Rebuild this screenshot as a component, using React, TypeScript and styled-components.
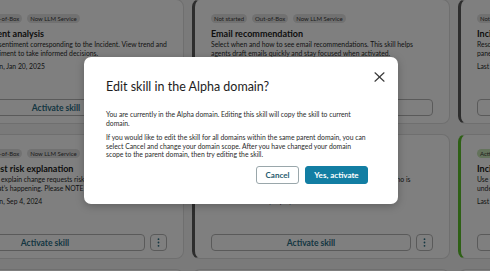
import React from 'react';
import styled, { createGlobalStyle } from 'styled-components';

const Global = createGlobalStyle`
  html, body { margin: 0; padding: 0; background: #f4f4f4; }
  body { font-family: Lato, "Noto Sans", Arial, sans-serif; color: #1d1d1d; }
  #root { width: 490px; height: 271px; overflow: hidden; position: relative; }
  * { box-sizing: border-box; }
`;

const Page = styled.div`
  width: 490px;
  height: 271px;
  overflow: hidden;
  position: relative;
  background: #f4f4f4;
`;

const Grid = styled.div`
  display: grid;
  grid-template-columns: repeat(3, 258px);
  grid-auto-rows: 125px;
  gap: 10px 8px;
  margin: -1px 0 0 -74px;
`;

const Card = styled.div<{ $accent?: string }>`
  background: #fff;
  border: 1px solid #dedede;
  border-left: 3px solid ${(p) => p.$accent ?? '#dedede'};
  border-radius: 8px;
  padding: 14px 16px 7px 16px;
  display: flex;
  flex-direction: column;
  overflow: hidden;
  white-space: nowrap;
`;

const Tags = styled.div`
  display: flex;
  gap: 5px;
  height: 9px;
`;

const Tag = styled.span<{ $tone?: 'green' }>`
  display: inline-flex;
  align-items: center;
  height: 9px;
  padding: 0 3px;
  border-radius: 5px;
  background: ${(p) => (p.$tone === 'green' ? '#c9e7b8' : '#e3e3e3')};
  color: #3b3b3b;
  font-size: 6px;
  line-height: 9px;
`;

const Title = styled.div`
  margin-top: 5px;
  font-size: 9px;
  line-height: 11px;
  font-weight: 700;
  color: #1b1b1b;
`;

const Desc = styled.div`
  margin-top: 1px;
  font-size: 6.8px;
  line-height: 9px;
  color: #2a2a2a;
`;

const Meta = styled.div`
  margin-top: 4px;
  font-size: 6.8px;
  line-height: 9px;
  color: #2a2a2a;
`;

const Footer = styled.div`
  margin-top: auto;
  display: flex;
  gap: 5px;
  height: 17px;
`;

const OutlineButton = styled.button`
  flex: 1;
  height: 17px;
  border: 1px solid #b5b5b5;
  border-radius: 4px;
  background: #fff;
  color: #2a6d83;
  font-family: Lato, "Noto Sans", sans-serif;
  font-weight: 700;
  font-size: 8.5px;
  padding: 0;
`;

const KebabButton = styled.button`
  width: 17px;
  height: 17px;
  flex: none;
  border: 1px solid #b5b5b5;
  border-radius: 4px;
  background: #fff;
  color: #2a6d83;
  padding: 0;
  display: flex;
  align-items: center;
  justify-content: center;
`;

const Overlay = styled.div`
  position: absolute;
  inset: 0;
  background: rgba(0, 0, 0, 0.5);
  display: flex;
  align-items: flex-start;
  justify-content: flex-start;
  padding: 57px 0 0 84px;
`;

const Modal = styled.div`
  width: 314px;
  height: 147px;
  background: #fff;
  border-radius: 7px;
  box-shadow: 0 2px 8px rgba(0, 0, 0, 0.25);
  display: flex;
  flex-direction: column;
  padding: 0 30px 0 22px;
`;

const Header = styled.div`
  display: flex;
  justify-content: space-between;
  align-items: flex-start;
  margin-right: -17px;
  padding-top: 15px;
`;

const ModalTitle = styled.h2`
  margin: 7px 0 0;
  font-size: 12.5px;
  line-height: 16px;
  font-weight: 400;
  color: #1d1d1d;
`;

const Close = styled.button`
  width: 12px;
  height: 10px;
  border: 0;
  padding: 0;
  background: transparent;
  display: flex;
  align-items: center;
  justify-content: center;
`;

const Body = styled.div`
  margin-top: 15px;
  font-size: 6.8px;
  line-height: 8.5px;
  color: #2b2b2b;
  p { margin: 0 0 6px; }
  p:last-child { margin-bottom: 0; }
`;

const Actions = styled.div`
  display: flex;
  justify-content: flex-end;
  gap: 6px;
  margin-top: 7.5px;
`;

const BaseBtn = styled.button`
  height: 18px;
  border-radius: 3px;
  font-family: Lato, "Noto Sans", sans-serif;
  font-weight: 700;
  font-size: 8px;
  padding: 0;
`;

const CancelBtn = styled(BaseBtn)`
  width: 43px;
  background: #fff;
  color: #1f5a6e;
  border: 1px solid #9aa7ab;
`;

const PrimaryBtn = styled(BaseBtn)`
  width: 63px;
  background: #127ea3;
  color: #fff;
  border: 1px solid #127ea3;
`;

type Skill = {
  accent?: string;
  status: string;
  green?: boolean;
  title: string;
  desc: [string, string];
  meta: string;
  kebab?: boolean;
};

const skills: Skill[] = [
  {
    status: 'Not started',
    title: 'Caller sentiment analysis',
    desc: ['Get the customer sentiment corresponding to the Incident. View trend and', 'all changes in sentiment to take informed decisions.'],
    meta: 'Last deactivated on, Jan 20, 2025',
  },
  {
    accent: '#5a5a5a',
    status: 'Not started',
    title: 'Email recommendation',
    desc: ['Select when and how to see email recommendations. This skill helps', 'agents draft emails quickly and stay focused when activated.'],
    meta: 'Last deactivated on, Jan 20, 2025',
  },
  {
    accent: '#5a5a5a',
    status: 'Not started',
    title: 'Incident resolution notes',
    desc: ['Resolution notes are generated from the incident details in the', 'panel when the incident is resolved.'],
    meta: 'Last deactivated on, Jan 20, 2025',
  },
  {
    status: 'Not started',
    title: 'Change request risk explanation',
    desc: ['Use Now Assist to explain change requests risk', 'so users know what\u2019s happening. Please NOTE'],
    meta: 'Last deactivated on, Sep 4, 2024',
    kebab: true,
  },
  {
    accent: '#5a5a5a',
    status: 'Not started',
    title: 'Incident summarization',
    desc: ['Generate a summary of an incident record so agents can see who is', 'affected and what has been done so far.'],
    meta: 'Last deactivated on, Sep 4, 2024',
    kebab: true,
  },
  {
    accent: '#5cc02a',
    status: 'Active',
    green: true,
    title: 'Incident summarization',
    desc: ['Use the summary to quickly', 'understand the incident.'],
    meta: 'Last deactivated on, Sep 4, 2024',
    kebab: true,
  },
  { status: 'Not started', title: 'Skill', desc: ['', ''], meta: '' },
  { status: 'Not started', title: 'Skill', desc: ['', ''], meta: '' },
  { status: 'Not started', title: 'Skill', desc: ['', ''], meta: '' },
];

const Dots = () => (
  <svg width="3" height="9" viewBox="0 0 3 9" fill="#2a6d83">
    <circle cx="1.5" cy="1.2" r="0.9" />
    <circle cx="1.5" cy="4.5" r="0.9" />
    <circle cx="1.5" cy="7.8" r="0.9" />
  </svg>
);

const SkillCard = ({ s }: { s: Skill }) => (
  <Card $accent={s.accent}>
    <Tags>
      <Tag $tone={s.green ? 'green' : undefined}>{s.status}</Tag>
      {!s.green && <Tag>Out-of-Box</Tag>}
      <Tag>Now LLM Service</Tag>
    </Tags>
    <Title>{s.title}</Title>
    <Desc>
      {s.desc[0]}
      <br />
      {s.desc[1]}
    </Desc>
    <Meta>{s.meta}</Meta>
    <Footer>
      <OutlineButton>Activate skill</OutlineButton>
      {s.kebab && (
        <KebabButton aria-label="More">
          <Dots />
        </KebabButton>
      )}
    </Footer>
  </Card>
);

export default function App() {
  return (
    <Page>
      <Global />
      <Grid>
        {skills.map((s, i) => (
          <SkillCard key={i} s={s} />
        ))}
      </Grid>
      <Overlay>
        <Modal role="dialog" aria-label="Edit skill in the Alpha domain?">
          <Header>
            <ModalTitle>Edit skill in the Alpha domain?</ModalTitle>
            <Close aria-label="Close">
              <svg width="11" height="10" viewBox="0 0 11 10" stroke="#3a3a3a" strokeWidth="1.2" strokeLinecap="round">
                <line x1="1" y1="0.8" x2="10" y2="9.2" />
                <line x1="10" y1="0.8" x2="1" y2="9.2" />
              </svg>
            </Close>
          </Header>
          <Body>
            <p>
              You are currently in the Alpha domain. Editing this skill will copy the skill to current
              <br />
              domain.
            </p>
            <p>
              If you would like to edit the skill for all domains within the same parent domain, you can
              <br />
              select Cancel and change your domain scope. After you have changed your domain
              <br />
              scope to the parent domain, then try editing the skill.
            </p>
          </Body>
          <Actions>
            <CancelBtn>Cancel</CancelBtn>
            <PrimaryBtn>Yes, activate</PrimaryBtn>
          </Actions>
        </Modal>
      </Overlay>
    </Page>
  );
}
